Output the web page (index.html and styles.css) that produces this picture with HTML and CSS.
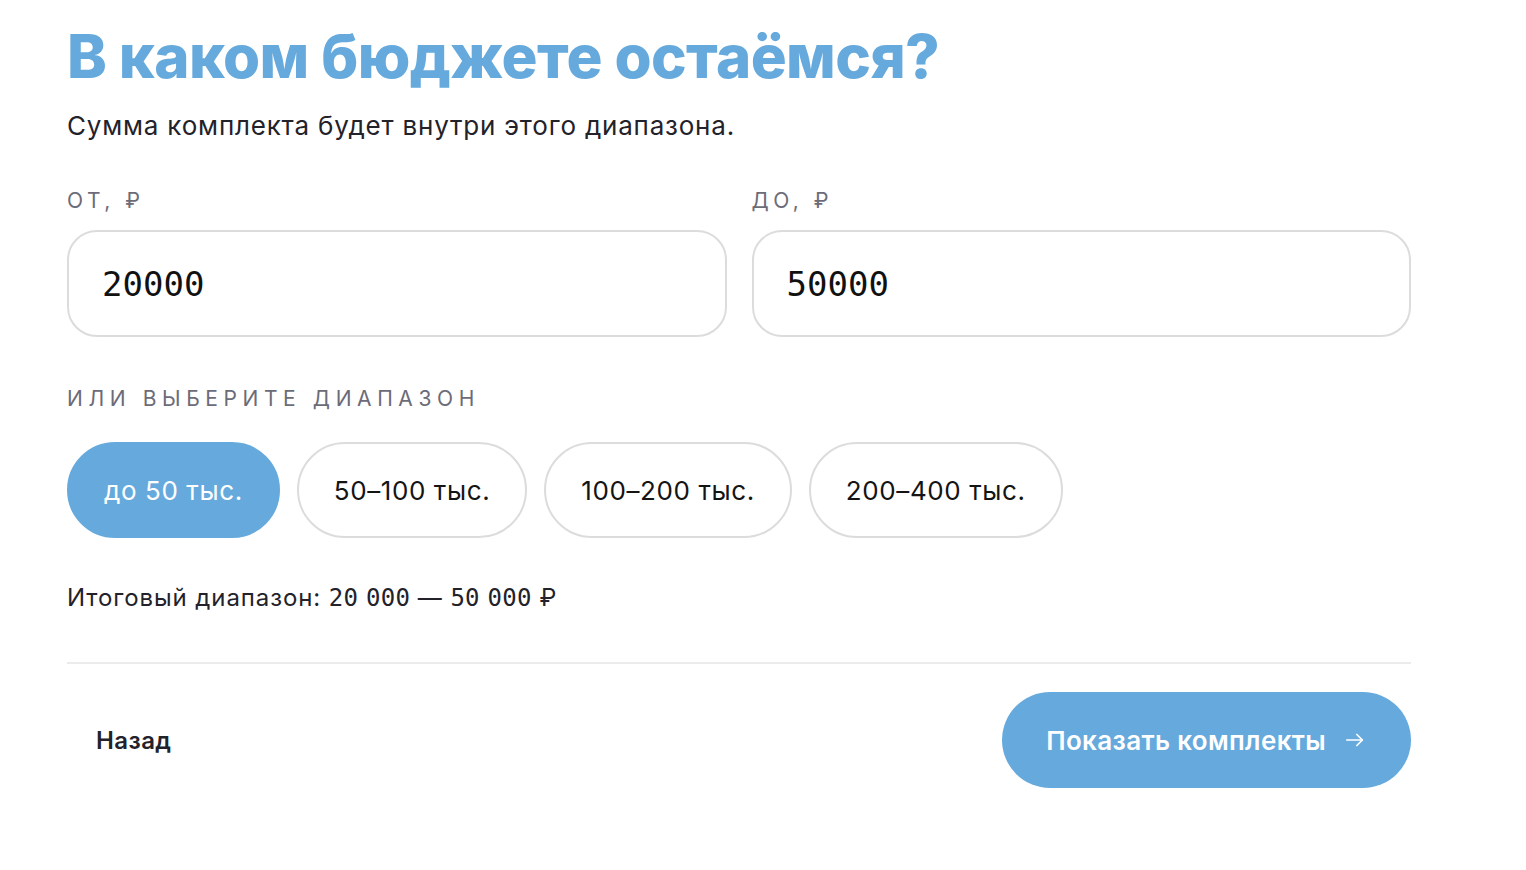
FILE: index.html
```html
<!DOCTYPE html>
<html lang="ru">
<head>
    <meta charset="UTF-8">
    <meta name="viewport" content="width=device-width, initial-scale=1.0">
    <title>Бюджет комплекта</title>
    <link rel="stylesheet" href="styles.css">
</head>
<body>
    <div class="step">
        <h1 class="step-title">В каком бюджете остаёмся?</h1>
        <p class="step-lead">Сумма комплекта будет внутри этого диапазона.</p>

        <div class="range-fields">
            <label class="field">
                <span class="field-label">От, ₽</span>
                <input class="field-input" type="text" value="20000">
            </label>
            <label class="field">
                <span class="field-label">До, ₽</span>
                <input class="field-input" type="text" value="50000">
            </label>
        </div>

        <div class="presets">
            <div class="presets-label">Или выберите диапазон</div>
            <div class="chips">
                <button class="chip chip-active">до 50 тыс.</button>
                <button class="chip">50–100 тыс.</button>
                <button class="chip">100–200 тыс.</button>
                <button class="chip">200–400 тыс.</button>
            </div>
        </div>

        <p class="summary">Итоговый диапазон: <span class="num">20</span> <span class="num">000</span> — <span class="num">50</span> <span class="num">000</span> ₽</p>

        <div class="step-footer">
            <button class="btn-back">Назад</button>
            <button class="btn-primary">
                Показать комплекты
                <svg width="22" height="22" viewBox="0 0 24 24" fill="none" stroke="currentColor" stroke-width="1.8" stroke-linecap="round" stroke-linejoin="round">
                    <path d="M3 12h17"/>
                    <path d="M14 6l6 6-6 6"/>
                </svg>
            </button>
        </div>
    </div>
</body>
</html>
```

FILE: styles.css
```css
body {
    margin: 0;
    background: #fff;
    font-family: Inter, "Noto Sans", sans-serif;
    color: #23222a;
}

.step {
    width: 1344px;
    padding: 20px 0 0 67px;
}

.step-title {
    margin: 0;
    font-size: 60px;
    font-weight: 800;
    line-height: 72px;
    letter-spacing: -0.6px;
    color: #66aadd;
}

.step-lead {
    margin: 18px 0 0;
    font-size: 26px;
    line-height: 32px;
    letter-spacing: 0.8px;
}

.range-fields {
    display: grid;
    grid-template-columns: 1fr 1fr;
    gap: 25px;
    margin-top: 47px;
}

.field {
    display: flex;
    flex-direction: column;
    gap: 17px;
}

.field-label,
.presets-label {
    font-size: 21px;
    line-height: 24px;
    text-transform: uppercase;
    letter-spacing: 4.5px;
    color: #6c6b78;
}

.field-input {
    box-sizing: border-box;
    height: 107px;
    padding: 0 33px;
    border: 2px solid #dcdcdc;
    border-radius: 30px;
    font-family: "DejaVu Sans Mono", monospace;
    font-size: 34px;
    color: #111;
    outline: none;
}

.presets {
    margin-top: 50px;
}

.presets-label {
    letter-spacing: 5.6px;
}

.chips {
    display: flex;
    gap: 17px;
    margin-top: 31px;
}

.chip {
    height: 96px;
    padding: 0 35px;
    border: 2px solid #dcdcdc;
    border-radius: 48px;
    background: #fff;
    font-family: inherit;
    font-size: 26px;
    letter-spacing: 0.6px;
    color: #141414;
}

.chip-active {
    border-color: #66aadd;
    background: #66aadd;
    color: #fff;
}

.summary {
    margin: 44px 0 0;
    font-size: 24px;
    line-height: 32px;
    letter-spacing: 0.9px;
}

.summary .num {
    font-family: "DejaVu Sans Mono", monospace;
    font-size: 24px;
    letter-spacing: 0.3px;
}

.step-footer {
    display: flex;
    justify-content: space-between;
    align-items: center;
    margin-top: 48px;
    padding-top: 28px;
    border-top: 2px solid #ebebeb;
}

.btn-back {
    padding: 0 29px;
    border: none;
    background: none;
    font-family: inherit;
    font-size: 24px;
    font-weight: 600;
    letter-spacing: 0.4px;
    color: #23222a;
}

.btn-primary {
    display: flex;
    align-items: center;
    gap: 18px;
    height: 96px;
    padding: 0 45px 0 44px;
    border: none;
    border-radius: 48px;
    background: #66aadd;
    font-family: inherit;
    font-size: 26px;
    font-weight: 600;
    letter-spacing: 0.35px;
    color: #fff;
}
```
